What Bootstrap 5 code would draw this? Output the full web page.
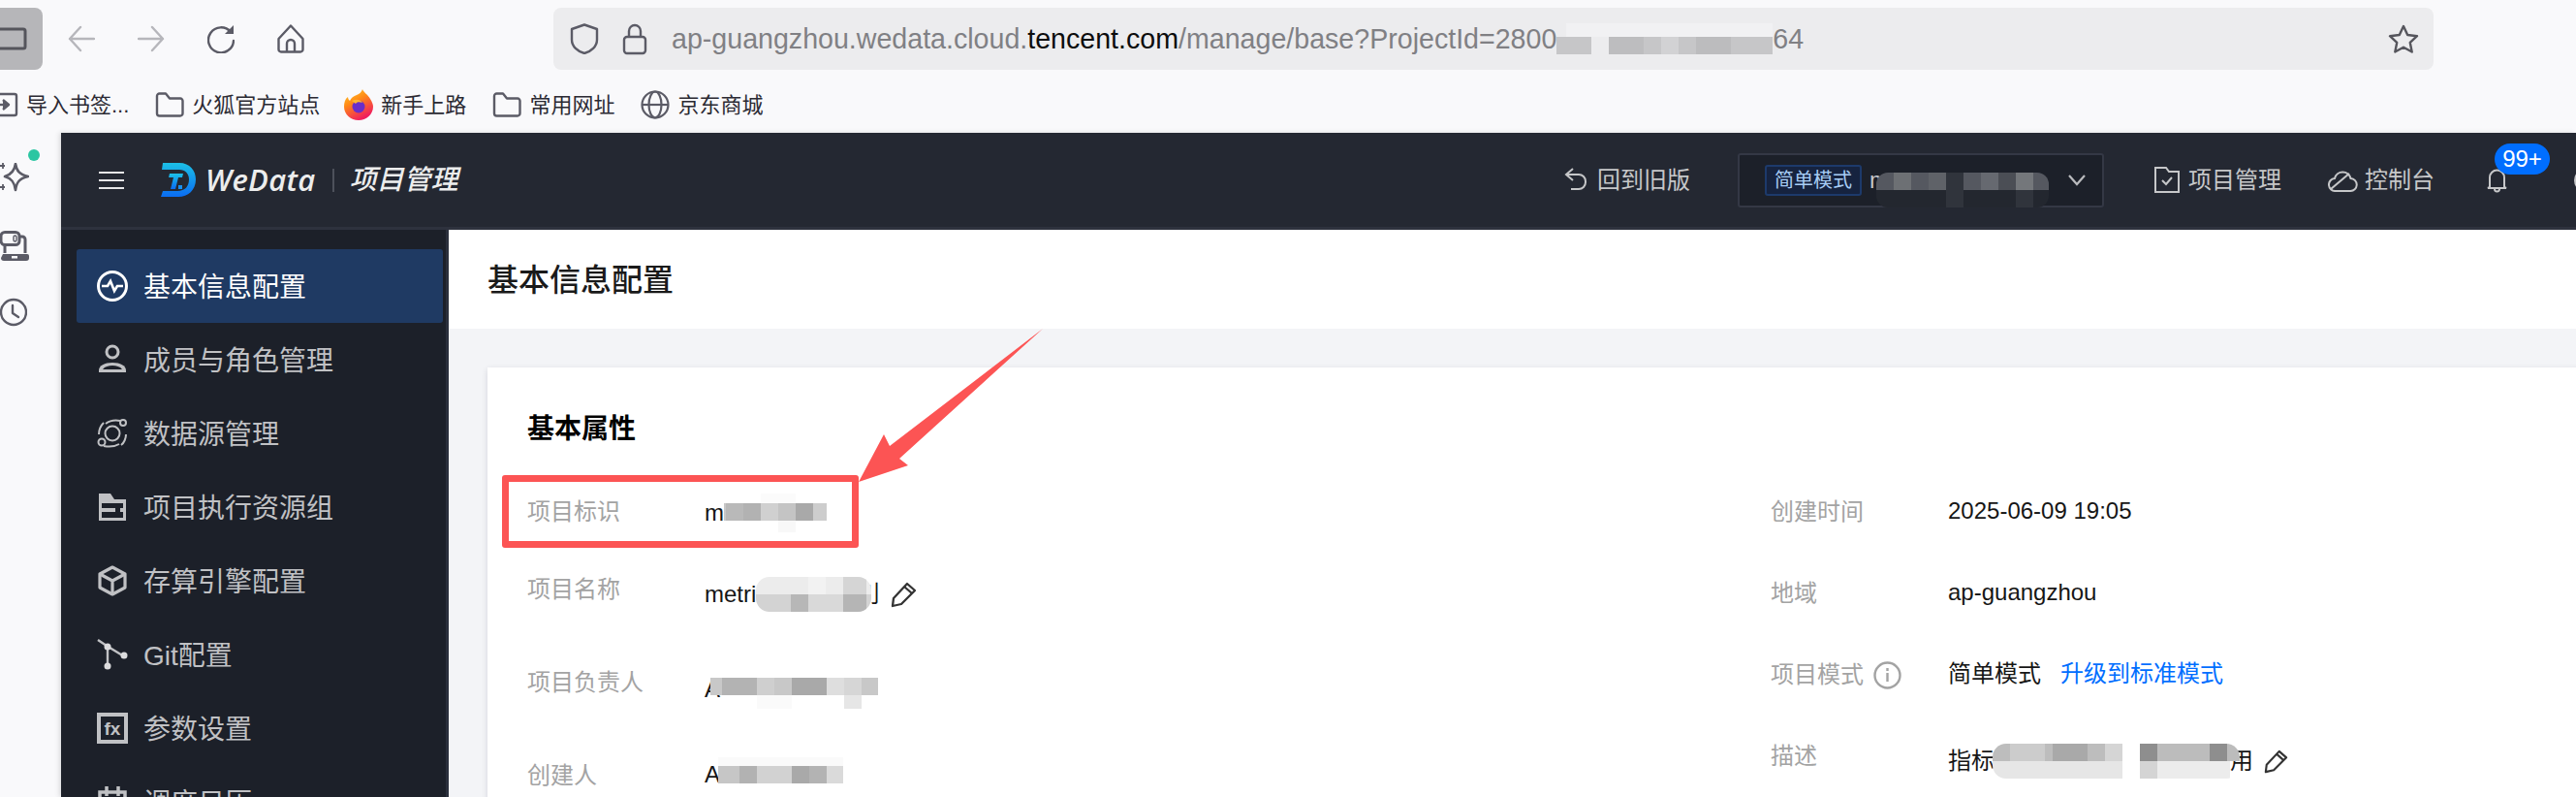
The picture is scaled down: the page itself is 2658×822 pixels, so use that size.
<!DOCTYPE html>
<html lang="zh-CN">
<head>
    <meta charset="UTF-8">
    <meta name="viewport" content="width=device-width, initial-scale=1.0">
    <title>WeData 项目管理</title>
    <link rel="stylesheet" href="https://cdn.jsdelivr.net/npm/bootstrap@5.3.0/dist/css/bootstrap.min.css">
    <style>
        html, body { margin: 0; height: 822px; overflow: hidden; background: #f9f9fb; }
        body { font-family: "Liberation Sans", "Noto Sans CJK SC", sans-serif; }
        svg { display: block; flex-shrink: 0; }
        .shot { width: 2658px; height: 822px; overflow: hidden; }

        /* browser chrome */
        .chrome { height: 137px; background: #f9f9fb; flex-shrink: 0; }
        .toolbar { height: 64px; margin-top: 8px; }
        .side-toggle { width: 44px; height: 64px; background: #b6b6b9; border-radius: 0 8px 8px 0; }
        .nav-btns { margin-left: 26px; gap: 44px; }
        .url-bar { margin-left: 257px; width: 1940px; height: 64px; background: #ececee; border-radius: 8px; padding: 0 15px 0 17px; }
        .url-text { margin-left: 25px; font-size: 28.6px; color: #808084; white-space: nowrap; line-height: 64px; }
        .url-text b { font-weight: 400; color: #0c0c0d; }
        .bookmarks { height: 58px; margin-top: 7px; margin-left: -11px; gap: 27px; font-size: 22px; color: #2b2a33; }
        .bm-item { gap: 8px; white-space: nowrap; }
        .bm-back { margin-left: -2px; }

        /* left browser strip */
        .strip { width: 63px; flex-shrink: 0; position: relative; padding-top: 17px; }
        .strip-dot { width: 12px; height: 12px; border-radius: 50%; background: #2cc6a2; margin: 0 0 2px 29px; }
        .strip-icons { gap: 40px; }
        .strip-clock { margin-top: -3px; }

        /* app header */
        .app { box-shadow: -2px 0 5px rgba(0,0,0,.12); min-width: 0; }
        .app-top { height: 100px; background: #242832; border-bottom: 3px solid #2e323e; padding-left: 39px; flex-shrink: 0; }
        .brand { margin-left: 38px; gap: 9px; }
        .brand-name { font-family: "Open Sans", sans-serif; font-style: italic; font-weight: 600; font-size: 31px; color: #eceded; letter-spacing: .3px; line-height: 1; }
        .brand-line { width: 2px; height: 24px; background: #4d515b; margin: 0 7px 0 8px; }
        .brand-sub { font-size: 28px; font-weight: 500; font-style: italic; color: #eceded; }
        .top-link { font-size: 24px; color: #c6c7c9; gap: 9px; white-space: nowrap; }
        .back-link { margin-left: auto; gap: 10px; }
        .proj-select { margin-left: 49px; width: 378px; height: 56px; background: #1c2029; border: 2px solid #343845; border-radius: 3px; padding: 0 17px 0 26px; }
        .proj-tag { width: 100px; height: 32px; background: #16233f; border: 2px solid #1d3a6b; border-radius: 3px; color: #a8cdf5; font-size: 20px; line-height: 28px; text-align: center; }
        .proj-name { margin-left: 8px; font-size: 24px; color: #c6c7c9; }
        .proj-blot { margin: 20px 0 0 -13px; border-radius: 12px; }
        .manage-link { margin-left: 52px; }
        .console-link { margin-left: 48px; gap: 7px; }
        .bell-box { margin-left: 53px; margin-right: 67px; position: relative; }
        .bell-badge { position: absolute; left: 9px; top: -25px; width: 57px; height: 32px; border-radius: 16px; background: #006eff; color: #fff; font-size: 24px; line-height: 32px; text-align: center; }
        .avatar-edge { margin-right: -23px; }

        /* sidebar */
        .side-nav { width: 400px; background: #1c2029; border-right: 3px solid #2a2f3c; padding: 20px 3px 0 16px; flex-shrink: 0; overflow: hidden; }
        .side-link { height: 76px; width: 378px; padding: 0 0 0 21px; gap: 16px; color: #c0c1c4; font-size: 28px; white-space: nowrap; border-radius: 3px; flex-shrink: 0; }
        .side-link svg { width: 32px; height: 32px; }
        .side-link span { padding-top: 3px; }
        .side-link.is-on { background: #1f3a63; color: #fff; }

        /* content */
        .page-head { height: 102px; background: #fff; padding: 2px 0 0 40px; flex-shrink: 0; }
        .page-head h1 { font-size: 32px; font-weight: 500; color: #1a1a1a; margin: 0; }
        .page-body { background: #f3f4f7; padding: 40px 0 0 40px; flex-grow: 1; overflow: hidden; }
        .attr-card { width: 2300px; height: 600px; border: 0; border-radius: 0; box-shadow: 0 2px 6px rgba(54,58,80,.16); padding: 44px 0 0 41px; background: #fff; }
        .attr-card h2 { font-size: 28px; font-weight: 700; line-height: 40px; color: #000; margin: 0 0 46px; }
        .attr-col { width: 1283px; flex-shrink: 0; }
        .attr-row { font-size: 24px; line-height: 36px; }
        .attr-h80 { height: 80px; }
        .attr-h96 { height: 96px; }
        .attr-h84 { height: 84px; }
        .attr-label { width: 183px; color: #a3a3a3; flex-shrink: 0; gap: 10px; padding-top: 1px; }
        .attr-value { color: #161616; white-space: nowrap; }
        .attr-low { margin-top: 6px; }
        .attr-link { color: #006eff; text-decoration: none; margin-left: 20px; }
        .blot { position: relative; z-index: 1; }
        .blot-soft { border-radius: 14px; }
        .blot-a { margin-left: -10px; }
        .blot-b { margin-left: -2px; }
        .tail-b { margin-left: -15px; }
        .tail-e { margin-left: -10px; }
        .pen-gap { margin-left: 11px; }

        /* annotation */
        .mark-box { position: absolute; left: 518px; top: 490px; width: 368px; height: 75px; border: 7px solid #fc5454; border-radius: 3px; }
        .mark-arrow { position: absolute; left: 880px; top: 335px; }
    </style>
</head>
<body>
<div class="shot position-relative d-flex flex-column">

    <!-- browser chrome -->
    <div class="chrome">
        <div class="toolbar d-flex align-items-center">
            <div class="side-toggle d-flex align-items-center">
                <svg width="28" height="24" viewBox="0 0 28 24" fill="none" stroke="#55555c" stroke-width="3"><rect x="-6" y="2" width="32" height="20" rx="2"/></svg>
            </div>
            <div class="nav-btns d-flex align-items-center">
                <svg width="28" height="28" viewBox="0 0 28 28" fill="none" stroke="#b6b6bb" stroke-width="2.4" stroke-linecap="round" stroke-linejoin="round"><path d="M27 14H2M13 2 2 14l11 12"/></svg>
                <svg width="28" height="28" viewBox="0 0 28 28" fill="none" stroke="#b6b6bb" stroke-width="2.4" stroke-linecap="round" stroke-linejoin="round"><path d="M1 14h25M15 2l11 12-11 12"/></svg>
                <svg width="28" height="30" viewBox="0 0 28 30" fill="none" stroke="#5b5b66" stroke-width="2.4" stroke-linecap="round"><path d="M24 8A13 13 0 1 0 27 17"/><path d="M27 1v9h-9z" fill="#5b5b66" stroke="none"/></svg>
                <svg width="28" height="30" viewBox="0 0 28 30" fill="none" stroke="#5b5b66" stroke-width="2.4" stroke-linejoin="round"><path d="M14 1.500 1.500 15v11a2.500 2.500 0 0 0 2.500 2.500h20a2.500 2.500 0 0 0 2.500-2.500V15zM10 28.500V20a4 4 0 0 1 8 0v8.500"/></svg>
            </div>
            <div class="url-bar d-flex align-items-center">
                <svg width="30" height="32" viewBox="0 0 30 32" fill="none" stroke="#5b5b66" stroke-width="2.400" stroke-linejoin="round"><path d="M15 1.500 2 6v11c0 7 6 12 13 14 7-2 13-7 13-14V6z"/></svg>
                <svg class="ms-4" width="26" height="33" viewBox="0 0 26 33" fill="none" stroke="#5b5b66" stroke-width="2.400"><rect x="2" y="14" width="22" height="17" rx="3"/><path d="M7 14V8a6 6 0 0 1 12 0v6"/></svg>
                <div class="url-text d-flex align-items-center">ap-guangzhou.wedata.cloud.<b>tencent.com</b>/manage/base?ProjectId=2800<svg width="223" height="32" viewBox="0 0 223 32" shape-rendering="crispEdges"><rect y="0" x="10" width="213" height="14" fill="#f1f1f3"/><rect y="14" width="223" height="18" fill="#c6c6c8"/><rect y="14" x="36" width="18" height="18" fill="#ececee"/><rect y="14" x="54" width="36" height="18" fill="#bdbdbf"/><rect y="14" x="108" width="18" height="18" fill="#d2d2d4"/><rect y="14" x="144" width="36" height="18" fill="#bcbcbe"/></svg>64</div>
                <svg class="ms-auto" width="32" height="30" viewBox="0 0 32 30" fill="none" stroke="#55555c" stroke-width="2.400" stroke-linejoin="round"><path d="m16 2 4.200 9 9.800 1.200-7.200 6.700 1.900 9.600L16 23.700l-8.700 4.800 1.900-9.600L2 12.200 11.800 11z"/></svg>
            </div>
        </div>
        <div class="bookmarks d-flex align-items-center">
            <div class="bm-item d-flex align-items-center">
                <svg width="30" height="26" viewBox="0 0 30 26" fill="none" stroke="#5b5b66" stroke-width="2.400" stroke-linejoin="round"><path d="M4 5V4a2 2 0 0 1 2-2h20a2 2 0 0 1 2 2v18a2 2 0 0 1-2 2H6a2 2 0 0 1-2-2v-1"/><path d="M0 13h19" /><path d="m14 8 6 5-6 5" fill="#5b5b66"/></svg>
                <span>导入书签...</span>
            </div>
            <div class="bm-item d-flex align-items-center">
                <svg width="30" height="26" viewBox="0 0 30 26" fill="none" stroke="#5b5b66" stroke-width="2.400" stroke-linejoin="round"><path d="M2 4a2.500 2.500 0 0 1 2.500-2.500H11l4 5h11a2.500 2.500 0 0 1 2.500 2.500v13a2.500 2.500 0 0 1-2.500 2.500H4.500A2.500 2.500 0 0 1 2 22z"/></svg>
                <span>火狐官方站点</span>
            </div>
            <div class="bm-item bm-back d-flex align-items-center">
                <svg width="30" height="32" viewBox="0 0 30 32">
                    <defs><linearGradient id="ffg" x1="0" y1="0" x2="0.5" y2="1"><stop offset="0" stop-color="#ffd32e"/><stop offset=".45" stop-color="#ff8a16"/><stop offset="1" stop-color="#f01f5d"/></linearGradient></defs>
                    <path d="M19 0c1 3 6 6 8 10 2 3 3 6 3 8 0 8-7 14-15 14S0 26 0 18c0-4 1-8 4-10 0 2 1 3 2 4 1-3 4-5 7-6 3-1 5-3 6-6z" fill="url(#ffg)"/>
                    <circle cx="15" cy="18" r="6.500" fill="#6a2ec9"/>
                    <path d="M8 12c4-2 9-2 11 2-3-1-6-1-7 1z" fill="#ffb52e"/>
                </svg>
                <span>新手上路</span>
            </div>
            <div class="bm-item d-flex align-items-center">
                <svg width="30" height="26" viewBox="0 0 30 26" fill="none" stroke="#5b5b66" stroke-width="2.400" stroke-linejoin="round"><path d="M2 4a2.500 2.500 0 0 1 2.500-2.500H11l4 5h11a2.500 2.500 0 0 1 2.500 2.500v13a2.500 2.500 0 0 1-2.500 2.500H4.500A2.500 2.500 0 0 1 2 22z"/></svg>
                <span>常用网址</span>
            </div>
            <div class="bm-item d-flex align-items-center">
                <svg width="30" height="30" viewBox="0 0 30 30" fill="none" stroke="#5b5b66" stroke-width="2.200"><circle cx="15" cy="15" r="13.500"/><ellipse cx="15" cy="15" rx="6.500" ry="13.500"/><path d="M2 15h26"/></svg>
                <span>京东商城</span>
            </div>
        </div>
    </div>

    <div class="d-flex flex-grow-1" style="min-height:0">
        <!-- browser sidebar strip -->
        <div class="strip d-flex flex-column">
            <div class="strip-dot"></div>
            <div class="strip-icons d-flex flex-column">
                <svg width="30" height="30" viewBox="0 0 30 30" fill="none" stroke="#5b5b66" stroke-width="2.600" stroke-linejoin="round"><path d="M16 1c1 7 4 11 13 13-9 2-12 6-13 14-1-8-4-12-11-14 7-2 10-6 11-13z"/><path d="M3 0v6M0 3h5M3 22v6M0 25h5" stroke-width="1.800"/></svg>
                <svg width="30" height="32" viewBox="0 0 30 32" fill="none" stroke="#5b5b66" stroke-width="3"><rect x="1" y="1.500" width="19" height="13" rx="4"/><path d="M20 6h3a3 3 0 0 1 3 3v14"/><rect x="14" y="5" width="3" height="6" rx="1.500" stroke-width="1.400"/><path d="M5 15v8"/><path d="M3 24h25a2 2 0 0 1 2 2v2a3 3 0 0 1-3 3H4a3 3 0 0 1-3-3z" fill="#5b5b66" stroke="none"/><rect x="12" y="26" width="6" height="2.500" fill="#f9f9fb" stroke="none"/></svg>
                <svg class="strip-clock" width="28" height="30" viewBox="0 0 28 30" fill="none" stroke="#5b5b66" stroke-width="2.400" stroke-linecap="round" stroke-linejoin="round"><circle cx="14" cy="15" r="13"/><path d="M13 8v8l6 4"/></svg>
            </div>
        </div>

        <div class="app flex-grow-1 d-flex flex-column">
            <!-- app header -->
            <div class="app-top d-flex align-items-center">
                <svg width="26" height="18" viewBox="0 0 26 18" stroke="#e6e6e8" stroke-width="2"><path d="M0 1h26M0 9h26M0 17h26"/></svg>
                <div class="brand d-flex align-items-center">
                    <svg width="37" height="35" viewBox="0 0 37 35">
                        <defs>
                            <linearGradient id="lgA" x1="0" y1="0" x2="0" y2="1"><stop offset="0" stop-color="#1cc0e6"/><stop offset="1" stop-color="#0a6cf2"/></linearGradient>
                        </defs>
                        <path d="M2 0h17c11 0 17 8 17 17 0 11-8 18-18 18H0l2-6h15c8 0 12-5 12-12 0-6-4-10-10-10H1z" fill="url(#lgA)"/>
                        <path d="M9 11h14l-1 4h-4l-3 12h-5l3-12H8z" fill="url(#lgA)"/>
                        <rect x="18" y="23" width="4" height="4" fill="#1890f0"/>
                    </svg>
                    <span class="brand-name">WeData</span>
                    <span class="brand-line"></span>
                    <span class="brand-sub">项目管理</span>
                </div>
                <div class="top-link back-link d-flex align-items-center">
                    <svg width="24" height="26" viewBox="0 0 24 26" fill="none" stroke="#c6c7c9" stroke-width="2"><path d="M9 1 2 7l7 6"/><path d="M2 7h13a7 7 0 0 1 7 7v1a7 7 0 0 1-7 7H7"/></svg>
                    <span>回到旧版</span>
                </div>
                <div class="proj-select d-flex align-items-center">
                    <span class="proj-tag">简单模式</span>
                    <span class="proj-name">m</span>
                    <svg class="blot proj-blot" width="178" height="36" viewBox="0 0 178 36" shape-rendering="crispEdges"><rect width="178" height="18" fill="#555860"/><rect y="18" width="178" height="18" fill="#23272f"/><rect x="18" width="18" height="18" fill="#6d7074"/><rect x="54" width="18" height="18" fill="#5f6268"/><rect x="72" width="18" height="36" fill="#30343c"/><rect x="108" width="18" height="18" fill="#666970"/><rect x="126" width="18" height="18" fill="#4b4e55"/><rect x="144" width="18" height="18" fill="#74777b"/><rect x="144" y="18" width="18" height="18" fill="#30343c"/></svg>
                    <svg class="ms-auto" width="18" height="12" viewBox="0 0 18 12" fill="none" stroke="#b9babd" stroke-width="2.200"><path d="m1 1 8 9 8-9"/></svg>
                </div>
                <div class="top-link manage-link d-flex align-items-center">
                    <svg width="26" height="27" viewBox="0 0 26 27" fill="none" stroke="#c6c7c9" stroke-width="2"><path d="M1 1h11l3 4h10v21H1z"/><path d="m8 14 4 4 6-7"/></svg>
                    <span>项目管理</span>
                </div>
                <div class="top-link console-link d-flex align-items-center">
                    <svg width="31" height="25" viewBox="0 0 31 25" fill="none" stroke="#c6c7c9" stroke-width="2"><path d="M8 24a6.500 6.500 0 0 1-1-13 8.500 8.500 0 0 1 16.500 0A6.500 6.500 0 0 1 23 24z"/><path d="M3 22 22 6"/></svg>
                    <span>控制台</span>
                </div>
                <div class="bell-box">
                    <svg width="23" height="26" viewBox="0 0 23 26" fill="none" stroke="#c6c7c9" stroke-width="2"><path d="M4 20V10a7.500 7.500 0 0 1 15 0v10l2 1H2z"/><path d="M9 22a2.500 2.500 0 0 0 5 0"/></svg>
                    <span class="bell-badge">99+</span>
                </div>
                <svg class="avatar-edge" width="26" height="26" viewBox="0 0 26 26" fill="none" stroke="#c6c7c9" stroke-width="2"><circle cx="13" cy="13" r="11"/></svg>
            </div>

            <div class="d-flex flex-grow-1" style="min-height:0">
                <!-- sidebar -->
                <nav class="side-nav nav flex-column flex-nowrap">
                    <a class="side-link is-on nav-link d-flex align-items-center" href="#">
                        <svg viewBox="0 0 32 32" fill="none" stroke="#fff" stroke-width="3"><circle cx="16" cy="16" r="14.500"/><path d="M5 16h6l3-5 4 10 3-5h6" stroke-width="2.600"/></svg>
                        <span>基本信息配置</span>
                    </a>
                    <a class="side-link nav-link d-flex align-items-center" href="#">
                        <svg viewBox="0 0 32 32" fill="none" stroke="#c0c1c4" stroke-width="3"><circle cx="16" cy="8" r="6"/><path d="M2 29v-2c0-5 6-8 14-8s14 3 14 8v2z" fill="#c0c1c4" stroke="none"/><path d="M6 26c2-3 6-4 10-4s8 1 10 4z" fill="#1c2029" stroke="none"/></svg>
                        <span>成员与角色管理</span>
                    </a>
                    <a class="side-link nav-link d-flex align-items-center" href="#">
                        <svg viewBox="0 0 32 32" fill="none" stroke="#c0c1c4" stroke-width="2"><circle cx="16" cy="16" r="7.500"/><path d="M7 5c-3 3-5 8-5 12M25 28c3-2 5-7 5-11M9 6c4-3 10-4 15-3M7 29c5 1 11 1 16-2"/><circle cx="27" cy="5" r="3"/><circle cx="5" cy="25" r="3.500"/></svg>
                        <span>数据源管理</span>
                    </a>
                    <a class="side-link nav-link d-flex align-items-center" href="#">
                        <svg viewBox="0 0 32 32"><path d="M2 2h12l4 6h12v22H2z" fill="#c0c1c4"/><path d="M5 12h22v5H5zM5 21h22v6H5zM19 17h5v4h-5z" fill="#1c2029"/></svg>
                        <span>项目执行资源组</span>
                    </a>
                    <a class="side-link nav-link d-flex align-items-center" href="#">
                        <svg viewBox="0 0 32 32" fill="none" stroke="#c0c1c4" stroke-width="3.200" stroke-linejoin="round"><path d="M16 2 29 9v14l-13 7-13-7V9z"/><path d="m3 9 13 7 13-7M16 16v14"/></svg>
                        <span>存算引擎配置</span>
                    </a>
                    <a class="side-link nav-link d-flex align-items-center" href="#">
                        <svg viewBox="0 0 32 32" fill="none" stroke="#c0c1c4" stroke-width="2.400"><path d="M1 1 10 7l18 11M11 8v18"/><circle cx="11" cy="8" r="3.500" fill="#dcdcde" stroke="none"/><circle cx="28" cy="17" r="3.500" fill="#dcdcde" stroke="none"/><circle cx="11" cy="28" r="3.500" fill="#dcdcde" stroke="none"/></svg>
                        <span>Git配置</span>
                    </a>
                    <a class="side-link nav-link d-flex align-items-center" href="#">
                        <svg viewBox="0 0 32 32" fill="none"><rect x="2" y="2" width="28" height="28" stroke="#c0c1c4" stroke-width="4"/><text x="16" y="23" text-anchor="middle" font-family="Liberation Sans" font-weight="700" font-size="19" fill="#c0c1c4">fx</text></svg>
                        <span>参数设置</span>
                    </a>
                    <a class="side-link nav-link d-flex align-items-center" href="#">
                        <svg viewBox="0 0 32 32" fill="none" stroke="#c0c1c4" stroke-width="3.500"><rect x="3" y="6" width="26" height="24"/><path d="M10 0v10M22 0v10M3 14h26"/></svg>
                        <span>调度日历</span>
                    </a>
                </nav>

                <!-- content -->
                <div class="flex-grow-1 d-flex flex-column" style="min-width:0">
                    <div class="page-head d-flex align-items-center"><h1>基本信息配置</h1></div>
                    <div class="page-body">
                        <div class="card attr-card">
                            <h2>基本属性</h2>
                            <div class="d-flex">
                                <div class="attr-col">
                                    <div class="attr-row attr-h80 d-flex">
                                        <div class="attr-label">项目标识</div>
                                        <div class="attr-value d-flex align-items-center align-self-start">m<svg class="blot" width="106" height="40" viewBox="0 0 106 40" shape-rendering="crispEdges"><rect x="38" y="0" width="36" height="10" fill="#fbfbfb"/><rect x="0" y="10" width="106" height="18" fill="#c8c8c8"/><rect x="2" y="10" width="18" height="18" fill="#b9b9b9"/><rect x="20" y="10" width="18" height="18" fill="#b2b2b2"/><rect x="38" y="10" width="18" height="18" fill="#d0d0d0"/><rect x="56" y="10" width="18" height="18" fill="#c4c4c4"/><rect x="74" y="10" width="18" height="18" fill="#a9a9a9"/><rect x="92" y="10" width="14" height="18" fill="#cdcdcd"/><rect x="56" y="28" width="18" height="12" fill="#f8f8f8"/></svg></div>
                                    </div>
                                    <div class="attr-row attr-h96 d-flex">
                                        <div class="attr-label">项目名称</div>
                                        <div class="attr-value attr-low d-flex align-items-center align-self-start">metri<svg class="blot blot-soft" width="119" height="36" viewBox="0 0 119 36" shape-rendering="crispEdges"><rect width="119" height="18" fill="#ececec"/><rect y="18" width="119" height="18" fill="#d3d3d3"/><rect x="36" y="18" width="18" height="18" fill="#b7b7b7"/><rect x="54" y="18" width="36" height="18" fill="#d9d9d9"/><rect x="90" y="18" width="24" height="18" fill="#b5b5b5"/><rect x="54" y="0" width="18" height="18" fill="#f2f2f2"/><rect x="90" y="0" width="24" height="18" fill="#d5d5d5"/></svg><span class="tail-b">刂</span>
                                            <svg class="pen-gap" width="27" height="27" viewBox="0 0 27 27" fill="none" stroke="#333" stroke-width="2.300" stroke-linejoin="round"><path d="m2 25 1-8L17 2l8 7-14 14z"/><path d="m14 5 8 7"/></svg>
                                        </div>
                                    </div>
                                    <div class="attr-row attr-h96 d-flex">
                                        <div class="attr-label">项目负责人</div>
                                        <div class="attr-value attr-low d-flex align-items-center align-self-start">A<svg class="blot blot-a" width="173" height="40" viewBox="0 0 173 40" shape-rendering="crispEdges"><rect x="0" y="8" width="173" height="18" fill="#c8c8c8"/><rect x="12" y="8" width="36" height="18" fill="#b3b3b3"/><rect x="48" y="8" width="18" height="18" fill="#cfcfcf"/><rect x="84" y="8" width="36" height="18" fill="#a9a9a9"/><rect x="120" y="8" width="18" height="18" fill="#dedede"/><rect x="138" y="8" width="18" height="18" fill="#d6d6d6"/><rect x="138" y="26" width="18" height="14" fill="#e6e6e6"/><rect x="48" y="26" width="36" height="14" fill="#fafafa"/></svg></div>
                                    </div>
                                    <div class="attr-row d-flex">
                                        <div class="attr-label">创建人</div>
                                        <div class="attr-value d-flex align-items-center align-self-start">A<svg class="blot blot-b" width="129" height="36" viewBox="0 0 129 36" shape-rendering="crispEdges"><rect y="0" x="0" width="129" height="9" fill="#fafafa"/><rect y="9" width="129" height="18" fill="#c6c6c6"/><rect y="9" x="22" width="18" height="18" fill="#b2b2b2"/><rect y="9" x="40" width="36" height="18" fill="#d2d2d2"/><rect y="9" x="76" width="18" height="18" fill="#a9a9a9"/><rect y="9" x="94" width="18" height="18" fill="#b3b3b3"/><rect y="9" x="112" width="17" height="18" fill="#dadada"/></svg></div>
                                    </div>
                                </div>
                                <div class="attr-col">
                                    <div class="attr-row attr-h84 d-flex">
                                        <div class="attr-label">创建时间</div>
                                        <div class="attr-value">2025-06-09 19:05</div>
                                    </div>
                                    <div class="attr-row attr-h84 d-flex">
                                        <div class="attr-label">地域</div>
                                        <div class="attr-value">ap-guangzhou</div>
                                    </div>
                                    <div class="attr-row attr-h84 d-flex">
                                        <div class="attr-label d-flex align-items-center align-self-start">项目模式
                                            <svg width="29" height="29" viewBox="0 0 29 29" fill="none" stroke="#a3a3a3" stroke-width="2.400"><circle cx="14.500" cy="14.500" r="13"/><path d="M14.500 12v9M14.500 7v3"/></svg>
                                        </div>
                                        <div class="attr-value">简单模式<a class="attr-link" href="#">升级到标准模式</a></div>
                                    </div>
                                    <div class="attr-row d-flex">
                                        <div class="attr-label">描述</div>
                                        <div class="attr-value attr-low d-flex align-items-center align-self-start">指标<svg class="blot blot-b blot-soft" width="255" height="36" viewBox="0 0 255 36" shape-rendering="crispEdges"><rect width="134" height="18" fill="#bdbdbd"/><rect width="134" y="18" height="18" fill="#e6e6e6"/><rect x="18" width="36" height="18" fill="#cccccc"/><rect x="62" width="36" height="18" fill="#a9a9a9"/><rect x="116" width="18" height="18" fill="#d5d5d5"/><rect x="152" width="103" height="18" fill="#bcbcbc"/><rect x="152" width="18" height="18" fill="#8e8e8e"/><rect x="224" width="18" height="18" fill="#8e8e8e"/><rect x="152" y="18" width="18" height="18" fill="#d4d4d4"/><rect x="170" y="18" width="75" height="18" fill="#ececec"/></svg><span class="tail-e">用</span>
                                            <svg class="pen-gap" width="25" height="25" viewBox="0 0 27 27" fill="none" stroke="#333" stroke-width="2.300" stroke-linejoin="round"><path d="m2 25 1-8L17 2l8 7-14 14z"/><path d="m14 5 8 7"/></svg>
                                        </div>
                                    </div>
                                </div>
                            </div>
                        </div>
                    </div>
                </div>
            </div>
        </div>
    </div>

    <!-- red annotation -->
    <div class="mark-box"></div>
    <svg class="mark-arrow" width="200" height="170" viewBox="880 335 200 170"><path d="M1076 339 918 460l-6-12-26 49 51-17-9-7z" fill="#fc5454"/></svg>
</div>
<script src="https://cdn.jsdelivr.net/npm/bootstrap@5.3.0/dist/js/bootstrap.bundle.min.js"></script>
</body>
</html>
